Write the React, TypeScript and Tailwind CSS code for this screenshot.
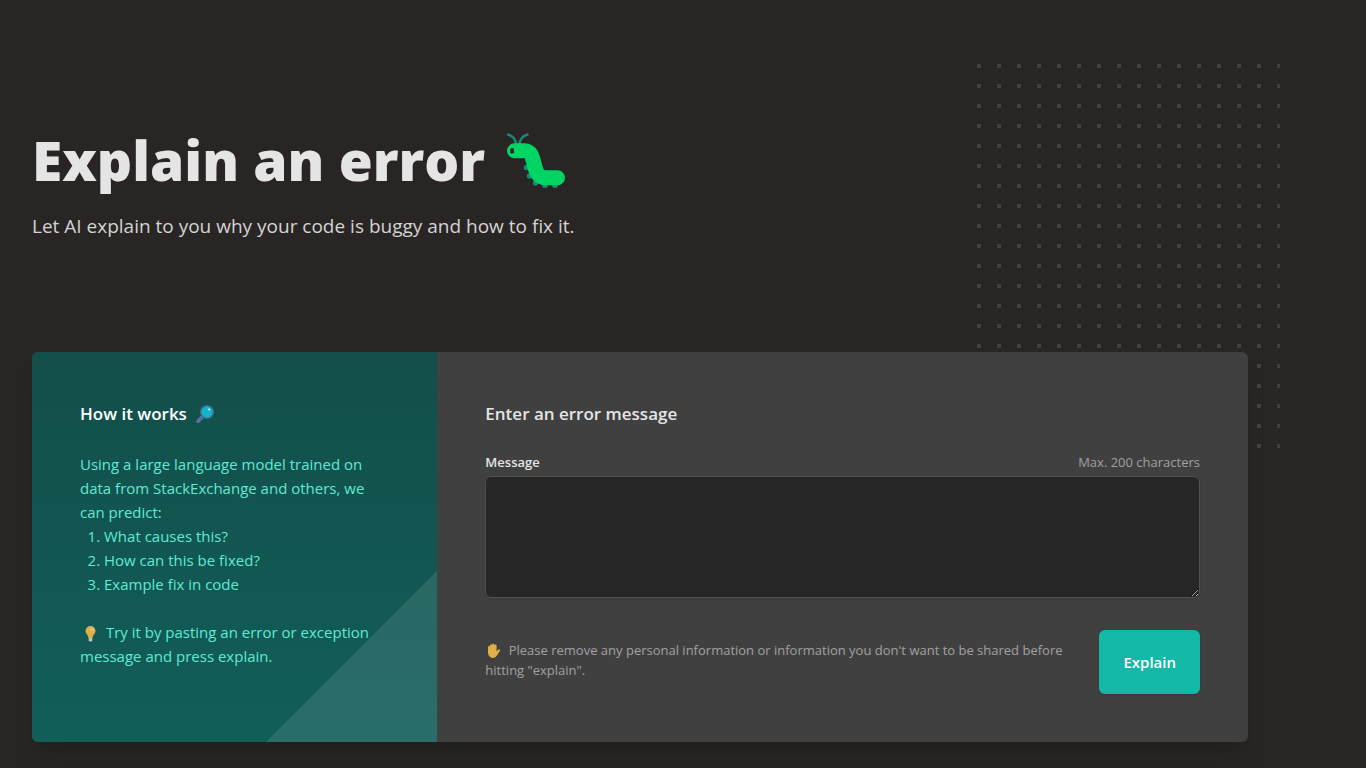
import { useState } from 'react';

const PREDICTIONS = ['What causes this?', 'How can this be fixed?', 'Example fix in code'];

const MAX_LENGTH = 200;

function Caterpillar() {
  return (
    <svg className="h-15 w-15 shrink-0" viewBox="0 0 60 60" fill="none" aria-hidden="true">
      <g stroke="#158a75" strokeWidth={2.4} strokeLinecap="round">
        <path d="M11 13C11 7 8 4 3 2.5" />
        <path d="M14.5 13C14.5 7 17.5 4 22.5 2.5" />
      </g>
      <g fill="#158a75">
        <circle cx="21.5" cy="35.5" r="2.7" />
        <circle cx="24.5" cy="44" r="2.7" />
        <circle cx="30.5" cy="51" r="2.7" />
        <circle cx="40" cy="53.2" r="2.9" />
        <circle cx="50" cy="53.2" r="2.9" />
      </g>
      <path
        d="M9.5 18.7H19.5C26 18.7 27.5 25 29 31.5C31 40 33 45.7 40.5 45.7H52.5"
        stroke="#00d563"
        strokeWidth={15}
        strokeLinecap="round"
      />
      <rect x="5.3" y="16" width="3.6" height="5.6" rx="1.4" fill="#292524" />
    </svg>
  );
}

function Magnifier() {
  return (
    <svg className="h-5 w-5" viewBox="0 0 20 20" fill="none" aria-hidden="true">
      <path d="M3 17.2L7.4 12.8" stroke="#5779a8" strokeWidth={3.6} strokeLinecap="round" />
      <path d="M3.6 16.6l2.6-2.6" stroke="#354d78" strokeWidth={1} strokeDasharray="1 1" />
      <circle cx="12" cy="8" r="6.3" fill="#16b4cb" stroke="#446996" strokeWidth={1.4} />
      <circle cx="14.2" cy="5.4" r="1" fill="#d9fbff" />
    </svg>
  );
}

function Bulb() {
  return (
    <svg className="mr-0.5 inline h-5 w-5 align-middle" viewBox="0 0 20 20" fill="none" aria-hidden="true">
      <path
        d="M10.5 2a5 5 0 0 0-5 5c0 2.8 2.6 3.8 3 7h4c.4-3.2 3-4.2 3-7a5 5 0 0 0-5-5z"
        fill="#deb047"
      />
      <circle cx="11.8" cy="5.2" r="1.7" fill="#e5c17f" />
      <path d="M8.7 14h3.6v2.2l-.8 1.3h-2l-.8-1.3z" fill="#b7c3c4" />
    </svg>
  );
}

function Hand() {
  return (
    <svg className="inline h-4 w-5 align-text-bottom" viewBox="0 0 20 16" aria-hidden="true">
      <path
        d="M3 4.5Q3 3 4 3Q4.5 3 4.8 3.4V2.6Q5 1.3 6 1.4Q6.7 1.4 6.9 2Q7 .8 8.2.8Q9.3.8 9.5 2Q9.9 1.4 10.7 1.6Q11.6 1.8 11.6 3V8.3L13.2 6.8Q14.4 5.8 15 6.6Q15.4 7.2 14.6 8.3L12.3 12Q10.7 15 8.3 15C5 15 3 12.5 3 9z"
        fill="#deae49"
      />
    </svg>
  );
}

function DotPattern() {
  return (
    <svg className="absolute right-0 top-16 h-96 w-[303px]" aria-hidden="true">
      <defs>
        <pattern id="dots" width={20} height={20} patternUnits="userSpaceOnUse">
          <rect width={4} height={4} fill="#404040" />
        </pattern>
      </defs>
      <rect width="100%" height="100%" fill="url(#dots)" />
    </svg>
  );
}

export default function App() {
  const [message, setMessage] = useState('');

  return (
    <div className="min-h-screen overflow-hidden bg-stone-800 font-['Open_Sans',sans-serif]">
      <main className="relative max-w-7xl px-8 pb-6">
        <DotPattern />

        {/* Header */}
        <header className="relative pt-32 pb-28">
          <h1 className="flex items-end gap-5 text-[55px] leading-16 font-extrabold text-neutral-200">
            Explain an error
            <Caterpillar />
          </h1>
          <p className="mt-5 text-[19px] leading-7 text-neutral-300">
            Let AI explain to you why your code is buggy and how to fix it.
          </p>
        </header>

        <div className="relative grid grid-cols-3 overflow-hidden rounded-md bg-neutral-700 shadow-xl">
          {/* How it works */}
          <section className="relative overflow-hidden bg-linear-to-b from-[#134e4a] to-[#115e59] p-12 text-[15px] leading-6 text-[#5eead4]">
            <svg className="absolute right-0 bottom-0 h-[171px] w-[171px]" viewBox="0 0 171 171" aria-hidden="true">
              <path d="M171 0V171H0z" fill="#fff" fillOpacity={0.1} />
            </svg>
            <div className="relative">
              <h2 className="flex items-center gap-2 text-[17px] leading-7 font-semibold text-white">
                How it works
                <Magnifier />
              </h2>
              <p className="mt-6">
                Using a large language model trained on data from StackExchange and others, we can predict:
              </p>
              <ol className="list-decimal pl-6">
                {PREDICTIONS.map((item) => (
                  <li key={item}>{item}</li>
                ))}
              </ol>
              <p className="mt-6">
                <Bulb /> Try it by pasting an error or exception message and press explain.
              </p>
            </div>
          </section>

          {/* Form */}
          <section className="col-span-2 p-12">
            <h2 className="text-[17px] leading-7 font-semibold text-neutral-200">Enter an error message</h2>
            <form className="mt-6" onSubmit={(e) => e.preventDefault()}>
              <div className="flex justify-between text-[13px] leading-5">
                <label htmlFor="message" className="font-semibold text-neutral-200">
                  Message
                </label>
                <span id="message-max" className="text-neutral-400">
                  Max. {MAX_LENGTH} characters
                </span>
              </div>
              <textarea
                id="message"
                rows={4}
                maxLength={MAX_LENGTH}
                aria-describedby="message-max"
                value={message}
                onChange={(e) => setMessage(e.target.value)}
                className="mt-1 block w-full rounded-md border border-neutral-600 bg-neutral-800 px-4 py-3 text-base text-neutral-200 shadow-sm"
              />
              <div className="mt-8 flex items-center justify-between gap-6">
                <p className="pb-1 text-[13px] leading-5 text-neutral-400">
                  <Hand /> Please remove any personal information or information you don't want to be shared before
                  hitting "explain".
                </p>
                <button
                  type="submit"
                  className="h-16 shrink-0 rounded-md bg-[#14b8a6] px-6 text-[15px] font-semibold text-white shadow-sm hover:bg-[#0d9488]"
                >
                  Explain
                </button>
              </div>
            </form>
          </section>
        </div>
      </main>
    </div>
  );
}
